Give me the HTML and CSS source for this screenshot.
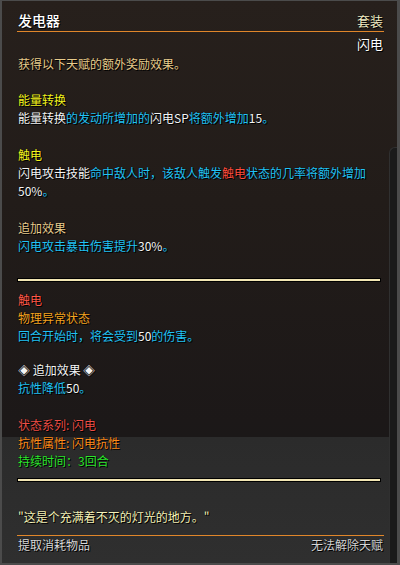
FILE: index.html
```html
<!DOCTYPE html>
<html lang="zh">
<head>
<meta charset="utf-8">
<title>发电器</title>
<link rel="stylesheet" href="styles.css">
</head>
<body>
<div class="frame">
  <div class="content">
    <div class="header"><span class="title">发电器</span><span class="set">套装</span></div>
    <div class="subtype">闪电</div>
    <div class="body">
      <p class="gold">获得以下天赋的额外奖励效果。</p>
      <p class="g1"><span class="yellow">能量转换</span><br>能量转换<span class="cy">的发动所增加的</span>闪电SP<span class="cy">将额外增加</span>15<span class="cy">。</span></p>
      <p class="g2"><span class="yellow">触电</span><br>闪电攻击技能<span class="cy">命中敌人时，该敌人触发</span><span class="red">触电</span><span class="cy">状态的几率将额外增加</span><br>50%<span class="cy">。</span></p>
      <p class="g2"><span class="gold2">追加效果</span><br><span class="cy">闪电攻击暴击伤害提升</span>30%<span class="cy">。</span></p>
    </div>
    <div class="sep sep1"></div>
    <div class="body">
      <p class="s1"><span class="red2">触电</span><br><span class="orange">物理异常状态</span><br><span class="cy">回合开始时，将会受到</span>50<span class="cy">的伤害。</span></p>
      <p class="s2">◈ 追加效果 ◈<br><span class="cy">抗性降低</span>50<span class="cy">。</span></p>
      <p class="s3"><span class="red3">状态系列: 闪电</span><br><span class="orange2">抗性属性: 闪电抗性</span><br><span class="green">持续时间：3回合</span></p>
    </div>
    <div class="sep sep2"></div>
    <p class="quote">"这是个充满着不灭的灯光的地方。"</p>
    <div class="footer"><span class="extract">提取消耗物品</span><span class="nounlock">无法解除天赋</span></div>
  </div>
  <div class="rail"></div>
</div>
</body>
</html>
```
FILE: styles.css
```css
html, body {
  margin: 0;
  padding: 0;
  background: #1e1e1e;
}
.frame {
  width: 400px;
  height: 565px;
  box-sizing: border-box;
  border-style: solid;
  border-color: #4b4b4b;
  border-width: 1px 3px 2px 2px;
  display: flex;
  background: linear-gradient(to bottom, #27201c 0px, #221c19 200px, #1c1818 420px, #1b1818 436px, #2b2b2b 436px, #2f2f2f 562px);
  font-family: "Noto Sans CJK SC", "Noto Sans", sans-serif;
  color: #f4f4f4;
  text-shadow: 1px 1px 0 #000, 0 0 1px #000;
}
.content {
  flex: 1;
  padding: 10px 6px 0 16px;
  display: flex;
  flex-direction: column;
}
.rail {
  width: 7px;
  margin-top: 146px;
  background: #1a1a1a;
  border-left: 1px solid #303030;
  border-top: 1px solid #303030;
  border-top-left-radius: 6px;
}
.header {
  display: flex;
  justify-content: space-between;
  align-items: flex-end;
  border-bottom: 1px solid #e0862a;
  margin: 0 -1px;
  padding: 0 1px 1px;
  height: 19px;
}
.title {
  font-size: 14px;
  line-height: 19px;
  font-weight: 500;
  color: #ffffff;
}
.set {
  font-size: 13px;
  line-height: 19px;
  color: #f2ecc4;
}
.subtype {
  text-align: right;
  font-size: 13px;
  line-height: 18px;
  margin-top: 3px;
  color: #ffffff;
}
.body {
  font-size: 12px;
  line-height: 18px;
}
.body p {
  margin: 0;
}
.body > .gold {
  margin-top: 2px;
}
.g1 { margin-top: 18px !important; }
.g2 { margin-top: 19px !important; }
.s1 { margin-top: 9px !important; }
.s2 { margin-top: 16px !important; }
.s3 { margin-top: 19px !important; }
.gold { color: #e8cc8c; }
.gold2 { color: #e8cc8e; }
.yellow { color: #f4f41e; }
.cy { color: #22c2f4; }
.red { color: #ff4c3c; }
.red2 { color: #ff5848; }
.red3 { color: #ec4e46; }
.orange { color: #f4a420; }
.orange2 { color: #ff8c1c; }
.green { color: #2ee62e; }
.sep {
  height: 2px;
  background: #f2e6b4;
  border: 1px solid #000;
  margin: 0 2px 0 -1px;
}
.sep1 { margin-top: 23px; }
.sep2 { margin-top: 8px; }
.quote {
  margin: 26px 0 0;
  font-size: 12px;
  line-height: 18px;
  color: #f6f2b8;
}
.footer {
  margin: 9px -1px 0;
  padding: 0 1px;
  border-top: 1px solid #e0862a;
  display: flex;
  justify-content: space-between;
  font-size: 12px;
  line-height: 18px;
}
.extract { color: #d8d8d8; }
.nounlock { color: #d4d4d4; }
```
